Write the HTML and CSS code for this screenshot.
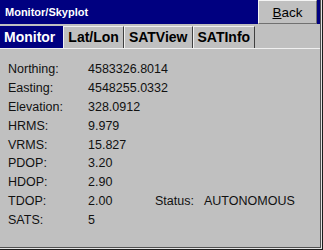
FILE: index.html
```html
<!DOCTYPE html>
<html>
<head>
<meta charset="utf-8">
<link rel="stylesheet" href="styles.css">
</head>
<body>
<div class="window">
  <div class="frame">
    <div class="inner">
      <div class="titlebar">
        <span class="title">Monitor/Skyplot</span>
        <button class="back"><u>B</u>ack</button>
      </div>
      <div class="tabs">
        <div class="tab active">Monitor</div>
        <div class="tab">Lat/Lon</div>
        <div class="tab">SATView</div>
        <div class="tab">SATInfo</div>
      </div>
      <div class="content">
        <div class="grid">
          <span>Northing:</span><span class="wide">4583326.8014</span>
          <span>Easting:</span><span class="wide">4548255.0332</span>
          <span>Elevation:</span><span class="wide">328.0912</span>
          <span>HRMS:</span><span class="wide">9.979</span>
          <span>VRMS:</span><span class="wide">15.827</span>
          <span>PDOP:</span><span class="wide">3.20</span>
          <span>HDOP:</span><span class="wide">2.90</span>
          <span>TDOP:</span><span>2.00</span><span>Status:</span><span>AUTONOMOUS</span>
          <span>SATS:</span><span class="wide">5</span>
        </div>
      </div>
    </div>
  </div>
</div>
</body>
</html>
```
FILE: styles.css
```css
html, body {
  margin: 0;
  padding: 0;
  background: #c0c0c0;
}
.window {
  width: 323px;
  height: 250px;
  box-sizing: border-box;
  border-right: 1px solid #1c1c1c;
  border-bottom: 1px solid #1c1c1c;
  background: #c0c0c0;
  font-family: "Liberation Sans", Arial, sans-serif;
}
.frame {
  height: 100%;
  box-sizing: border-box;
  border-right: 1px solid #e4e4e4;
  border-bottom: 1px solid #e4e4e4;
}
.inner {
  height: 100%;
  box-sizing: border-box;
  border-right: 1px solid #505050;
  border-bottom: 1px solid #505050;
  display: flex;
  flex-direction: column;
}
.titlebar {
  height: 24px;
  background: #000080;
  display: flex;
  align-items: stretch;
  justify-content: space-between;
  padding-right: 3px;
}
.title {
  color: #fff;
  font-weight: bold;
  font-size: 11px;
  padding-left: 5px;
  display: flex;
  align-items: center;
}
.back {
  width: 59px;
  height: 24px;
  margin: 0;
  padding: 0;
  background: #c0c0c0;
  border-top: 1px solid #f4f4f4;
  border-left: 1px solid #f4f4f4;
  border-right: 1px solid #707070;
  border-bottom: 1px solid #707070;
  font-family: "Liberation Sans", Arial, sans-serif;
  font-size: 13.5px;
  color: #000;
}
.back u {
  text-decoration-thickness: 1px;
}
.tabs {
  display: flex;
  margin-top: 2px;
  height: 22px;
  border-bottom: 1px solid #f0f0f0;
}
.tab {
  font-weight: bold;
  font-size: 14px;
  line-height: 21px;
  padding: 0 4px;
  color: #000;
  border-top: 1px solid #f0f0f0;
  border-left: 1px solid #f0f0f0;
  border-right: 1px solid #404040;
}
.tab.active {
  background: #000080;
  color: #fff;
  border-color: #000080;
  padding: 0 7px 0 3px;
}
.content {
  flex: 1;
  padding: 11px 0 0 8px;
  font-size: 12.5px;
  color: #111;
}
.grid {
  display: grid;
  grid-template-columns: 80px 67px 49px auto;
  grid-auto-rows: 18.8px;
  align-items: center;
}
.grid .wide {
  grid-column: 2 / 5;
}
```
